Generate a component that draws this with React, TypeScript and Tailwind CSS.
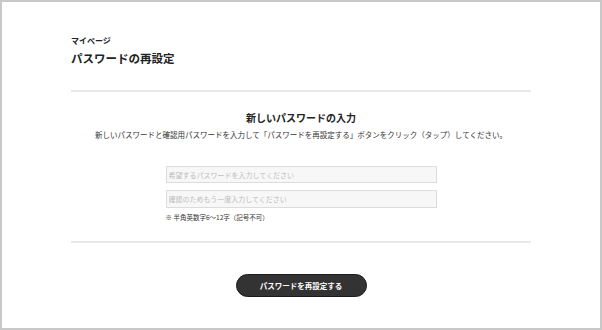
export default function App() {
  return (
    <div className="h-[330px] w-[602px] border-2 border-[#c8c8c8] bg-white font-['Noto_Sans_CJK_JP',sans-serif] text-[#222]">
      <div className="flex flex-col px-[69px] pt-[35px]">
        <p className="text-[8px] font-bold leading-[8px]">マイページ</p>
        <h1 className="mt-[7px] text-[11.5px] font-bold leading-[12px]">パスワードの再設定</h1>

        <div className="mt-[26px] h-[2px] bg-[#e8e8e8]" />

        <h2 className="mt-[21px] text-center text-[10px] font-bold leading-[10px]">新しいパスワードの入力</h2>
        <p className="mt-[8px] text-center text-[7.5px] leading-[8px] text-[#333]">
          新しいパスワードと確認用パスワードを入力して「パスワードを再設定する」ボタンをクリック（タップ）してください。
        </p>

        <div className="mx-auto mt-[27px] flex w-[271px] flex-col">
          <input
            type="password"
            placeholder="希望するパスワードを入力してください"
            className="h-[17px] border border-[#dcdcdc] bg-[#f7f7f7] pl-[2px] text-[7px] outline-none placeholder:text-[#bdbdbd]"
          />
          <input
            type="password"
            placeholder="確認のためもう一度入力してください"
            className="mt-[7px] h-[18px] border border-[#dcdcdc] bg-[#f7f7f7] pl-[2px] text-[7px] outline-none placeholder:text-[#bdbdbd]"
          />
          <p className="mt-[6px] text-[6.5px] leading-[7px] text-[#333]">※ 半角英数字6〜12字（記号不可）</p>
        </div>

        <div className="mt-[20px] h-[2px] bg-[#e8e8e8]" />

        <button className="mx-auto mt-[31px] h-[23px] w-[131px] rounded-full border border-[#1a1a1a] bg-[#333] text-[7.5px] font-bold text-white">
          パスワードを再設定する
        </button>
      </div>
    </div>
  )
}
